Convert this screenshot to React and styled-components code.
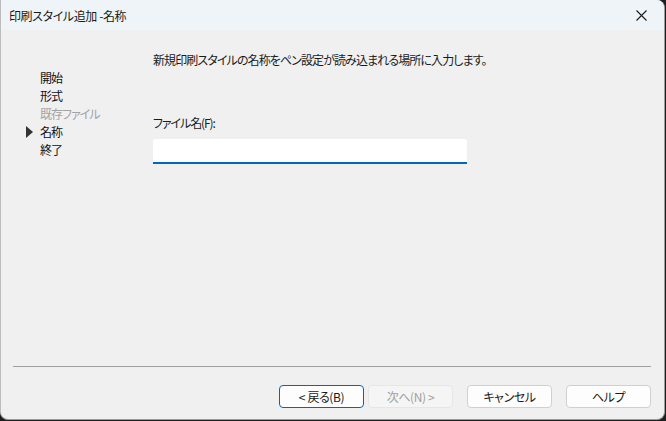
import React from "react";
import styled, { createGlobalStyle } from "styled-components";

const Global = createGlobalStyle`
  html, body { margin: 0; padding: 0; background: #1e1e1e; }
  body {
    font-family: "Noto Sans CJK JP", "Noto Sans", sans-serif;
    font-size: 12px;
    font-feature-settings: "palt";
  }
  * { box-sizing: border-box; }
`;

const Window = styled.div`
  width: 665px;
  height: 420px;
  background: #f0f0f0;
  border: 1px solid #9c9c9c;
  border-top: none;
  border-left-color: #bdbdbd;
  border-radius: 0 8px 8px 8px;
  overflow: hidden;
  display: flex;
  flex-direction: column;
`;

const TitleBar = styled.div`
  height: 30px;
  background: #eef4f8;
  display: flex;
  align-items: center;
  justify-content: space-between;
  padding-left: 8px;
  color: #1a1a1a;
  font-size: 12px;
  letter-spacing: -0.4px;
`;

const CloseButton = styled.div`
  width: 46px;
  height: 30px;
  display: flex;
  align-items: center;
  justify-content: center;
`;

const Main = styled.div`
  flex: 1;
  display: flex;
  padding-top: 21px;
`;

const Nav = styled.div`
  width: 152px;
  padding-left: 25px;
  padding-top: 18px;
  display: flex;
  flex-direction: column;
  letter-spacing: -1px;
`;

const NavItem = styled.div`
  display: flex;
  align-items: center;
  height: 18px;
  line-height: 18px;
  color: ${(p) => (p.$disabled ? "#a2a2a2" : "#111")};
`;

const ArrowSlot = styled.div`
  width: 14px;
  display: flex;
  align-items: center;
`;

const Content = styled.div`
  display: flex;
  flex-direction: column;
`;

const Description = styled.div`
  line-height: 18px;
  color: #1a1a1a;
  letter-spacing: -0.9px;
`;

const Label = styled.div`
  margin-top: 45px;
  line-height: 18px;
  color: #1a1a1a;
  letter-spacing: -1.1px;
`;

const Input = styled.input`
  margin-top: 7px;
  width: 314px;
  height: 25px;
  border: none;
  border-bottom: 2px solid #0067c0;
  border-radius: 3px 3px 0 0;
  background: #fff;
  outline: none;
  padding: 0 6px;
  font: inherit;
`;

const Footer = styled.div`
  display: flex;
  flex-direction: column;
  padding: 0 13px 11px 12px;
`;

const Separator = styled.div`
  height: 1px;
  background: #a0a0a0;
`;

const ButtonRow = styled.div`
  margin-top: 18px;
  display: flex;
  justify-content: flex-end;
  gap: 14px;
`;

const Group = styled.div`
  display: flex;
  gap: 4px;
`;

const Button = styled.div`
  width: 85px;
  height: 23px;
  display: flex;
  align-items: center;
  justify-content: center;
  border-radius: 4px;
  background: ${(p) => (p.$disabled ? "#f5f5f5" : "#fdfdfd")};
  border: 1px solid
    ${(p) => (p.$primary ? "#0067c0" : p.$disabled ? "#e6e6e6" : "#d0d0d0")};
  color: ${(p) => (p.$disabled ? "#a0a0a0" : "#1a1a1a")};
  font-size: 12px;
  letter-spacing: -0.4px;
`;

const navItems = [
  { label: "開始" },
  { label: "形式" },
  { label: "既存ファイル", disabled: true },
  { label: "名称", current: true },
  { label: "終了" },
];

export default function App() {
  return (
    <>
      <Global />
      <Window>
        <TitleBar>
          <span>印刷スタイル追加 -名称</span>
          <CloseButton>
            <svg width="11" height="11" viewBox="0 0 11 11">
              <path d="M0.5 0.5 L10.5 10.5 M10.5 0.5 L0.5 10.5" stroke="#1a1a1a" strokeWidth="1.1" />
            </svg>
          </CloseButton>
        </TitleBar>
        <Main>
          <Nav>
            {navItems.map((it) => (
              <NavItem key={it.label} $disabled={it.disabled}>
                <ArrowSlot>
                  {it.current && (
                    <svg width="8" height="12" viewBox="0 0 8 12">
                      <path d="M0 0 L7 6 L0 12 Z" fill="#333" />
                    </svg>
                  )}
                </ArrowSlot>
                {it.label}
              </NavItem>
            ))}
          </Nav>
          <Content>
            <Description>新規印刷スタイルの名称をペン設定が読み込まれる場所に入力します。</Description>
            <Label>ファイル名(F):</Label>
            <Input />
          </Content>
        </Main>
        <Footer>
          <Separator />
          <ButtonRow>
            <Group>
              <Button $primary>&lt; 戻る(B)</Button>
              <Button $disabled>次へ(N) &gt;</Button>
            </Group>
            <Button>キャンセル</Button>
            <Button>ヘルプ</Button>
          </ButtonRow>
        </Footer>
      </Window>
    </>
  );
}
